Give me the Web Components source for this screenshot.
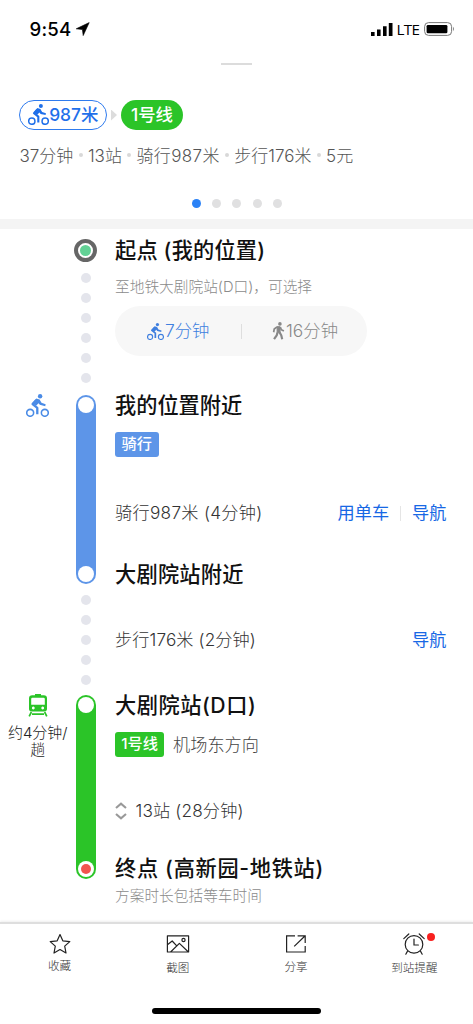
<!DOCTYPE html>
<html lang="zh-CN">
<head>
<meta charset="utf-8">
<title>路线详情</title>
<style>
html,body{margin:0;padding:0;background:#fff}
body{width:473px;height:1024px;overflow:hidden;font-family:Inter,"Noto Sans CJK SC",sans-serif;color:#111}
</style>
</head>
<body>
<transit-page></transit-page>
<script>
const define=(name,css,html)=>customElements.define(name,class extends HTMLElement{
  constructor(){
    super();
    const t=document.createElement('template');
    t.innerHTML='<style>:host{box-sizing:border-box}*{box-sizing:border-box}svg{display:block}'+css+'</style>'+(typeof html==='function'?html(this):html);
    this.attachShadow({mode:'open'}).append(t.content.cloneNode(true));
  }
});

const icons={
  bike:'<svg viewBox="0 0 22 22" width="100%" height="100%" fill="none" stroke="currentColor"><circle cx="13.5" cy="2.1" r="2.1" fill="currentColor" stroke="none"/><circle cx="4" cy="18" r="3.3" stroke-width="1.5"/><circle cx="18" cy="18" r="3.3" stroke-width="1.5"/><path d="M9.8 5.8 6.3 9.6 10.8 13.2V19.4" stroke-width="2.2" stroke-linejoin="round"/><path d="M9.8 4.2 13 5.2 14.8 8.4 18.8 9.8 18.4 11.6 13.2 10.4 12 8.8 9.6 11.2 6 9z" fill="currentColor" stroke="none"/></svg>',
  walk:'<svg viewBox="0 0 13 19" width="100%" height="100%" fill="none" stroke="currentColor" stroke-linejoin="round"><circle cx="8" cy="2" r="1.9" fill="currentColor" stroke="none"/><path d="M5 4.8 8.2 5 8.2 11.2 5 11.2z" fill="currentColor" stroke-width="1"/><path d="M5 5.2 2 7.4 1.4 10.8M8.4 5.5 9.6 8.2 12.2 9.6" stroke-width="1.8"/><path d="M5.4 11 4.6 14.2 1.8 18.2M7.6 11 9.4 14 10.4 18.2" stroke-width="2.3"/></svg>',
  train:'<svg viewBox="0 0 20 23" width="100%" height="100%"><path fill="currentColor" fill-rule="evenodd" d="M7 0h6v1.2h2.8Q19 1.4 19 4.2V14.8Q19 17.4 16.4 17.4H3.6Q1 17.4 1 14.8V4.2Q1 1.4 4.2 1.2H7zM3.2 5.1V10.8H16.8V5.1Q16.8 3.7 15.6 3.7H4.4Q3.2 3.7 3.2 5.1zM5.3 12.6a1.4 1.4 0 1 0 .01 0zM14.7 12.6a1.4 1.4 0 1 0 .01 0z"/><path d="M3.4 18 1.2 22.4M16.6 18 18.8 22.4M4 20.2H16" fill="none" stroke="currentColor" stroke-width="1.7"/></svg>',
  updown:'<svg viewBox="0 0 12 18" width="100%" height="100%" fill="none" stroke="currentColor" stroke-width="2.1"><path d="M1 6 6 1.6 11 6M1 12 6 16.4 11 12"/></svg>',
  star:'<svg viewBox="0 0 22 22" width="22" height="22" fill="none" stroke="#222" stroke-width="1.2" stroke-linejoin="round"><path d="M11 1.5 13.8 7.8 20.8 8.6 15.7 13.1 17 20 11 16.6 5 20 6.3 13.1 1.2 8.6 8.2 7.8z"/></svg>',
  image:'<svg viewBox="0 0 24 20" width="24" height="20" fill="none" stroke="#222" stroke-width="1.2" stroke-linejoin="round"><path d="M1.4 1.8H22.6V18H1.4zM1.4 10.8 6.2 7 11.2 12.4M4.6 18 13.4 9.4 22.4 18"/><circle cx="17.5" cy="6" r="1.6"/></svg>',
  share:'<svg viewBox="0 0 22 20" width="22" height="20" fill="none" stroke="#222" stroke-width="1.2"><path d="M10 1.8H1.6V18H20.2V12M12.6 1.8H20.2V9M20.2 1.8 9.2 12.4"/></svg>',
  alarm:'<svg viewBox="0 0 24 24" width="24" height="24" fill="none" stroke="#222" stroke-width="1.2" stroke-linecap="round"><circle cx="12" cy="12.4" r="8.8"/><path d="M12 7V13H16.4M1.8 6.6 6.8 2M17.2 2 22.2 6.6M5.4 19.4 3.8 22.2M18.6 19.4 20.2 22.2"/></svg>'
};
define('ui-icon',':host{display:block;flex:none}',h=>icons[h.getAttribute('name')]);

define('status-bar',`
:host{display:flex;height:58px;align-items:center;padding:0 18.5px 0 29.5px;color:#000}
.time{font-size:18.6px;font-weight:500;letter-spacing:.25px;line-height:24px;width:46px;white-space:nowrap}
svg{flex:none}
.right{display:flex;margin-left:auto;align-items:center}
.lte{font:400 15.2px/20px "Open Sans",sans-serif;letter-spacing:-.6px;width:27px;margin-left:3.5px}`,
`<div class="time">9:54</div>
<svg width="14" height="14" viewBox="0 0 14 14"><path d="M.2 6.8 13.2.6 7.2 13.6 6.4 7.6z" stroke="#000" stroke-width=".6"/></svg>
<div class="right"><svg width="22" height="14" viewBox="0 0 22 14"><path d="M0 10h3.6v4H0zM6 7.4h3.6V14H6zM12 4.2h3.6V14H12zM17.8 1h3.7v13h-3.7z"/></svg>
<div class="lte">LTE</div>
<svg width="31" height="14" viewBox="0 0 31 14"><rect x=".6" y=".6" width="27" height="12.8" rx="4" fill="none" stroke="#777"/><rect x="2.6" y="2.9" width="20.8" height="8.4" rx="1.4"/><path d="M29 4.8Q31 7 29 9.2z" fill="#888"/></svg></div>`);

define('mode-pill',`
:host{display:flex;align-items:center;justify-content:center;height:30px;border-radius:15px;font-size:17.4px;font-weight:500;line-height:28px;white-space:nowrap}
:host([kind=bike]){width:88px;border:1px solid #2f7bee;color:#1f70ea}
:host([kind=metro]){width:62px;background:#2bc428;color:#fff}`,'<slot></slot>');

define('page-dots',`
:host{display:flex;gap:11.2px;height:9px;padding-left:192px}
i{width:9px;height:9px;border-radius:50%;background:#e0e0e1}
i:first-of-type{background:#2b82f6}`,'<i></i><i></i><i></i><i></i><i></i>');

define('route-summary',`
:host{display:block;height:171px;border-bottom:10px solid #f4f4f4}
.grab{width:31px;height:2px;margin:5px 0 0 221px;background:#dcdcdc}
.modes{display:flex;align-items:center;margin:35px 0 0 19px}
.arrow{width:6px;height:11px;margin:0 4px;background:#dcdcdc;clip-path:polygon(0 0,100% 50%,0 100%)}
.bike{width:21px;height:21px;margin:-2px .5px 0 0}
.facts{display:flex;align-items:center;height:24px;margin:12px 0 33px 19.5px;font-size:17px;font-weight:300;color:#555;white-space:nowrap}
.facts i{width:4px;height:4px;border-radius:50%;background:#d8d8d8;margin:2px 5.3px 0 5.3px}
.wide{letter-spacing:.35px}`,
`<div class="grab"></div>
<div class="modes"><mode-pill kind="bike"><ui-icon class="bike" name="bike"></ui-icon>987米</mode-pill><div class="arrow"></div><mode-pill kind="metro">1号线</mode-pill></div>
<div class="facts"><span>37分钟</span><i></i><span>13站</span><i></i><span class="wide">骑行987米</span><i></i><span>步行176米</span><i></i><span>5元</span></div>
<page-dots></page-dots>`);

define('stop-title',':host{display:block;height:20px;line-height:20px;font-size:21.2px;font-weight:500;white-space:nowrap;color:#111}','<slot></slot>');
define('line-tag',`
:host{display:inline-flex;align-items:center;justify-content:center;height:25px;width:var(--w,43.5px);padding-bottom:1px;border-radius:3px;background:var(--c);color:#fff;font-size:15.2px;line-height:22px;font-weight:500;white-space:nowrap}`,'<slot></slot>');

define('stop-dots',`
:host{display:flex;flex-direction:column;align-items:center;gap:10.1px}
i{width:10px;height:10px;border-radius:50%;background:#e4e5ec}`,h=>'<i></i>'.repeat(+h.getAttribute('count')));

define('rail-bar',`
:host{display:flex;flex-direction:column;justify-content:space-between;align-items:center;width:20px;border-radius:10px;background:var(--c);padding:2px 0}
i{width:16px;height:16px;border-radius:50%;background:#fff;display:flex;align-items:center;justify-content:center}
:host([end]) i:last-child::before{content:"";width:10px;height:10px;border-radius:50%;background:#f2544f}`,'<i></i><i></i>');

define('start-ring',':host{display:flex;align-items:center;justify-content:center;width:23px;height:23px;border-radius:50%;border:4px solid #666}i{width:11px;height:11px;border-radius:50%;background:#62d195}','<i></i>');

define('route-leg',`
:host{display:grid;grid-template-columns:75.5px 20px 1fr;column-gap:0}
.side{display:flex;flex-direction:column;align-items:center}
.rail{display:flex;flex-direction:column;align-items:center}
.body{padding-left:19.5px;min-width:0}`,
`<div class="side"><slot name="side"></slot></div><div class="rail"><slot name="rail"></slot></div><div class="body"><slot></slot></div>`);

define('mode-switch',`
:host{display:flex;align-items:center;width:252px;height:50px;border-radius:25px;background:#f7f7f7;font-size:17.4px;line-height:24px;font-weight:300;white-space:nowrap}
.a{display:flex;align-items:center;width:126px;padding-left:32px;color:#3f7fdf}
.a ui-icon{width:17px;height:17px;margin-right:1px}
.d{width:1px;height:15px;background:#dedede}
.b{display:flex;align-items:center;padding-left:29.5px;color:#888}
.b ui-icon{width:13px;height:18px;margin-right:1.5px}`,
`<div class="a"><ui-icon name="bike"></ui-icon>7分钟</div><div class="d"></div><div class="b"><ui-icon name="walk"></ui-icon>16分钟</div>`);

define('leg-detail',`
:host{display:flex;align-items:center;height:20px;line-height:20px;font-size:17.2px;font-weight:300;color:#333;white-space:nowrap;padding-right:26.5px}
.act{margin-left:auto;display:flex;align-items:center;font-weight:400;letter-spacing:0;color:#1768e5}`,
`<slot></slot><div class="act"><slot name="action"></slot></div>`);

define('route-timeline',`
:host{display:block;height:693px}
.start{height:166px}.bike{height:189px}.walk{height:111px}
.start stop-title{margin-top:11px}
.note{height:20px;line-height:20px;font-size:14.7px;font-weight:300;color:#8b8b8b;white-space:nowrap}
.sep{width:1px;height:15px;background:#e5e5e5;margin:0 11px}
.freq{font-size:15px;font-weight:300;line-height:18px;text-align:center;white-space:nowrap;color:#222;margin-top:7px}
.freq span{display:block}
.freq span+span{font-size:14.5px;margin-top:-1px}
.bikeicon{width:23px;height:23px;margin:-1px 0 0;color:#4a8be6}
.trainicon{width:20px;height:23px;margin:-1px 0 0;color:#2bc428}
.tagrow{display:flex;align-items:center;height:25px;margin-top:17px;font-size:17.2px;line-height:23px;font-weight:300;color:#444;white-space:nowrap}
.tagrow span{padding-bottom:1px}
.ud{width:12px;height:18px;margin-right:8.5px;color:#999}`,
`<route-leg class="start"><start-ring slot="rail" style="margin-top:9.5px"></start-ring><stop-dots slot="rail" count="6" style="margin-top:11.5px"></stop-dots>
<stop-title style="letter-spacing:.2px">起点 (我的位置)</stop-title><div class="note" style="margin-top:17px">至地铁大剧院站(D口)，可选择</div><mode-switch style="margin-top:9px"></mode-switch></route-leg>
<route-leg class="bike"><ui-icon slot="side" name="bike" class="bikeicon"></ui-icon><rail-bar slot="rail" style="--c:#5d95e8;height:189px"></rail-bar>
<stop-title>我的位置附近</stop-title><div class="tagrow"><line-tag style="--c:#5d95e8">骑行</line-tag></div>
<leg-detail style="margin-top:46px;letter-spacing:.3px">骑行987米 (4分钟)<span slot="action">用单车</span><i slot="action" class="sep"></i><span slot="action">导航</span></leg-detail>
<stop-title style="margin-top:41px;letter-spacing:.25px">大剧院站附近</stop-title></route-leg>
<route-leg class="walk"><stop-dots slot="rail" count="5" style="margin-top:10.5px"></stop-dots><leg-detail style="margin-top:46px;letter-spacing:.1px">步行176米 (2分钟)<span slot="action">导航</span></leg-detail></route-leg>
<route-leg><ui-icon slot="side" name="train" class="trainicon"></ui-icon><div slot="side" class="freq"><span>约4分钟/</span><span>趟</span></div><rail-bar slot="rail" end style="--c:#2bc428;height:184px"></rail-bar>
<stop-title style="letter-spacing:.55px">大剧院站(D口)</stop-title><div class="tagrow"><line-tag style="--c:#2bc428;--w:49px;margin-right:9px">1号线</line-tag><span>机场东方向</span></div>
<leg-detail style="margin-top:44px;letter-spacing:.15px"><ui-icon name="updown" class="ud"></ui-icon>13站 (28分钟)</leg-detail>
<stop-title style="margin-top:37px;letter-spacing:.7px">终点 (高新园-地铁站)</stop-title><div class="note" style="margin-top:8px">方案时长包括等车时间</div></route-leg>`);

define('tab-item',`
:host{display:flex;flex-direction:column;align-items:center;position:relative;font-size:11.6px;font-weight:300;line-height:16px;color:#333;white-space:nowrap}
:host([alert])::after{content:"";position:absolute;left:calc(50% + 13px);top:9px;width:8px;height:8px;border-radius:50%;background:#f8201f}`,'<slot></slot>');

define('tab-bar',`
:host{display:block;height:102px;background:#fff;border-top:2px solid #dedede;box-shadow:0 -1px 2px #0001}
.items{display:grid;grid-template-columns:repeat(4,118.25px);height:84px;padding-left:.5px}
.home{width:169px;height:6px;border-radius:3px;background:#000;margin-left:152px}`,
`<div class="items"><tab-item><ui-icon name="star" style="margin-top:9px"></ui-icon><span style="margin-top:2.5px">收藏</span></tab-item>
<tab-item><ui-icon name="image" style="margin-top:10px"></ui-icon><span style="margin-top:6px">截图</span></tab-item>
<tab-item><ui-icon name="share" style="margin-top:10px"></ui-icon><span style="margin-top:5px">分享</span></tab-item>
<tab-item alert><ui-icon name="alarm" style="margin-top:8px"></ui-icon><span style="margin-top:4px">到站提醒</span></tab-item></div><div class="home"></div>`);

define('transit-page',':host{display:flex;flex-direction:column;width:473px;height:1024px;overflow:hidden;background:#fff}status-bar,route-summary,route-timeline,tab-bar{flex:none}',
'<status-bar></status-bar><route-summary></route-summary><route-timeline></route-timeline><tab-bar></tab-bar>');
</script>
</body>
</html>
